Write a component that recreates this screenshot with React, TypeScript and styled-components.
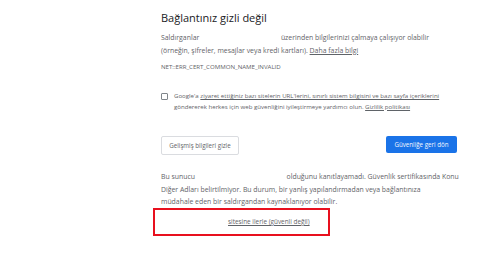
import React from 'react';
import styled, { createGlobalStyle } from 'styled-components';

const GlobalStyle = createGlobalStyle`
  html, body {
    margin: 0;
    padding: 0;
    background: #ffffff;
  }
  body {
    font-family: "Open Sans", "Noto Sans", sans-serif;
    color: #5f6368;
  }
`;

function App() {
  return (
    <>
      <GlobalStyle />
      <Page>
        <Main>
          <Title>Bağlantınız gizli değil</Title>
          <Text>
            Saldırganlar <Redacted $width={78} /> üzerinden bilgilerinizi çalmaya çalışıyor olabilir
            <br />
            (örneğin, şifreler, mesajlar veya kredi kartları). <Link>Daha fazla bilgi</Link>
          </Text>
          <ErrorCode>NET::ERR_CERT_COMMON_NAME_INVALID</ErrorCode>
          <CheckRow>
            <CheckBox />
            <CheckText>
              Google'a <Link>ziyaret ettiğiniz bazı sitelerin URL'lerini, sınırlı sistem bilgisini ve bazı sayfa içeriklerini</Link>
              <br />
              göndererek herkes için web güvenliğini iyileştirmeye yardımcı olun. <Link>Gizlilik politikası</Link>
            </CheckText>
          </CheckRow>
          <ButtonRow>
            <SecondaryButton>Gelişmiş bilgileri gizle</SecondaryButton>
            <PrimaryButton>Güvenliğe geri dön</PrimaryButton>
          </ButtonRow>
        </Main>
        <Details>
          <Text>
            Bu sunucu <Redacted $width={88} /> olduğunu kanıtlayamadı. Güvenlik sertifikasında Konu
            <br />
            Diğer Adları belirtilmiyor. Bu durum, bir yanlış yapılandırmadan veya bağlantınıza
            <br />
            müdahale eden bir saldırgandan kaynaklanıyor olabilir.
          </Text>
          <ProceedBox>
            <Link>sitesine ilerle (güvenli değil)</Link>
          </ProceedBox>
        </Details>
      </Page>
    </>
  );
}

export default App;

const Page = styled.div`
  width: 500px;
  height: 270px;
  box-sizing: border-box;
  padding: 11px 43px 0 161px;
  overflow: hidden;
`;

const Main = styled.div`
  display: flex;
  flex-direction: column;
`;

const Title = styled.h1`
  margin: 0 0 7px;
  font-size: 11px;
  line-height: 14px;
  font-weight: 400;
  color: #202124;
`;

const Text = styled.p`
  margin: 0;
  font-size: 6.9px;
  line-height: 12.5px;
  white-space: nowrap;
  color: #5f6368;
`;

const Redacted = styled.span<{ $width: number }>`
  display: inline-block;
  width: ${p => p.$width}px;
`;

const Link = styled.span`
  text-decoration: underline;
  color: #5f6368;
`;

const ErrorCode = styled.div`
  margin-top: 5px;
  font-size: 6.1px;
  line-height: 10px;
  color: #5f6368;
`;

const CheckRow = styled.div`
  display: flex;
  align-items: flex-start;
  gap: 6px;
  margin-top: 19px;
`;

const CheckBox = styled.span`
  flex: none;
  width: 5px;
  height: 5px;
  margin-top: 2px;
  border: 1px solid #80868b;
  border-radius: 1px;
`;

const CheckText = styled.p`
  margin: 0;
  font-size: 6.1px;
  line-height: 10.5px;
  white-space: nowrap;
  color: #5f6368;
`;

const ButtonRow = styled.div`
  display: flex;
  justify-content: space-between;
  align-items: flex-start;
  margin-top: 24px;
`;

const SecondaryButton = styled.button`
  width: 78px;
  height: 19px;
  padding: 0;
  border: 1px solid #dadce0;
  border-radius: 2px;
  background: #ffffff;
  font-family: "Open Sans", "Noto Sans", sans-serif;
  font-size: 6.2px;
  color: #5f6368;
`;

const PrimaryButton = styled.button`
  width: 71px;
  height: 17px;
  padding: 0;
  border: none;
  border-radius: 2px;
  background: #1a73e8;
  font-family: "Open Sans", "Noto Sans", sans-serif;
  font-size: 6.2px;
  color: #f4f8fe;
`;

const Details = styled.div`
  margin-top: 16px;
  display: flex;
  flex-direction: column;
`;

const ProceedBox = styled.div`
  display: flex;
  justify-content: flex-start;
  align-items: center;
  box-sizing: border-box;
  width: 177px;
  height: 28px;
  margin: -1px 0 0 -8px;
  padding-left: 73px;
  border: 2px solid #e8101e;
  font-size: 6.4px;
  color: #5f6368;
`;
